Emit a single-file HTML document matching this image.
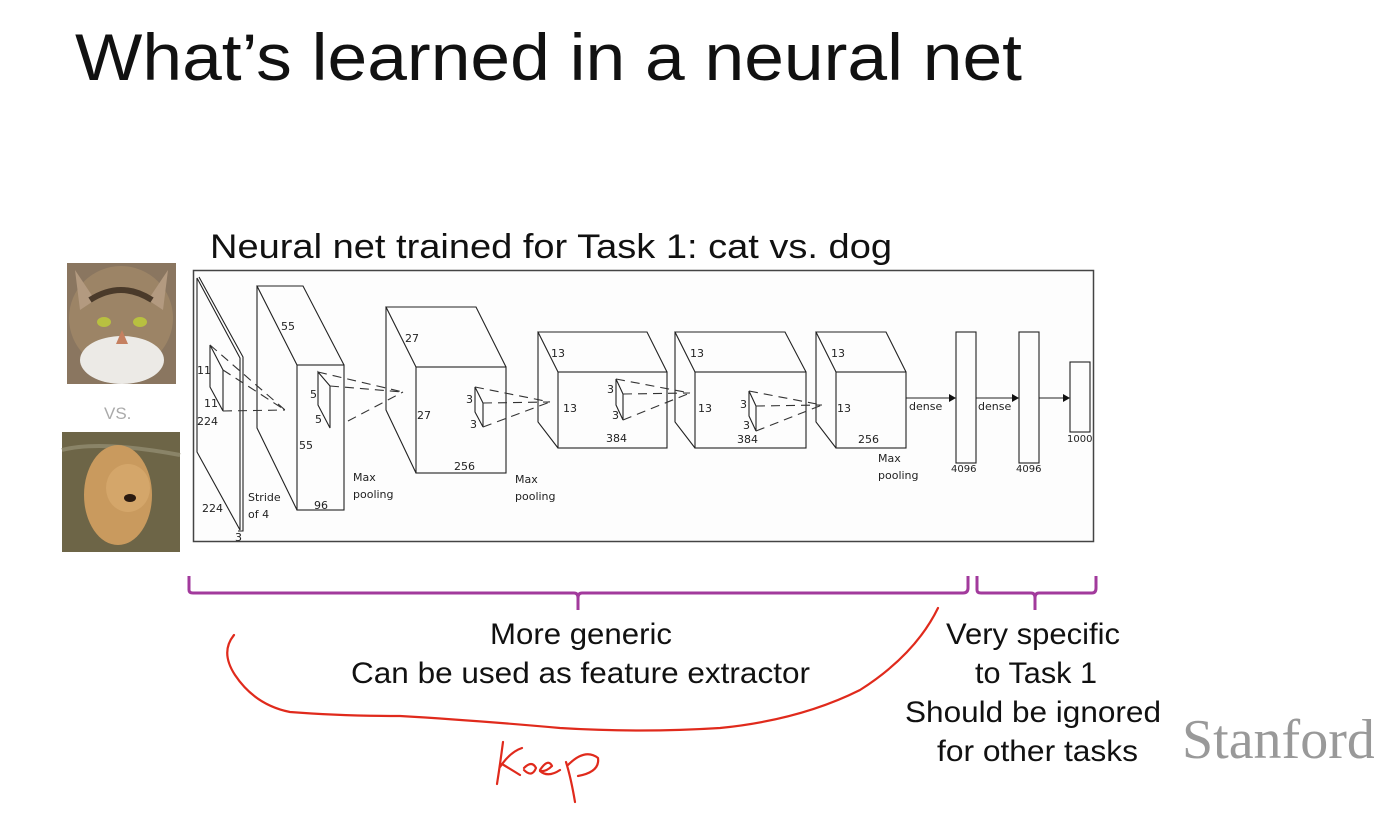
<!DOCTYPE html>
<html><head><meta charset="utf-8"><style>
html,body{margin:0;padding:0;background:#fff;width:1374px;height:818px;overflow:hidden}
svg{display:block}
.s{font-family:"DejaVu Sans",sans-serif;font-size:11px;fill:#222}
.h{font-family:"Liberation Sans",sans-serif;fill:#111}
</style></head><body>
<svg width="1374" height="818" viewBox="0 0 1374 818" xmlns="http://www.w3.org/2000/svg">
<rect width="1374" height="818" fill="#fff"/>
<text class="h" x="75" y="80" font-size="66" textLength="947" lengthAdjust="spacingAndGlyphs">What’s learned in a neural net</text>
<text class="h" x="210" y="258" font-size="34" textLength="682" lengthAdjust="spacingAndGlyphs">Neural net trained for Task 1: cat vs. dog</text>

<!-- cat -->
<g>
<rect x="67" y="263" width="109" height="121" fill="#8a7660"/>
<ellipse cx="121" cy="318" rx="52" ry="52" fill="#9c8466"/>
<polygon points="75,270 95,300 80,310" fill="#b39a80"/>
<polygon points="168,270 148,300 163,310" fill="#b39a80"/>
<path d="M90 300 Q121 280 152 300" stroke="#4a3a2a" stroke-width="6" fill="none"/>
<ellipse cx="122" cy="360" rx="42" ry="24" fill="#eceae6"/>
<ellipse cx="104" cy="322" rx="7" ry="5" fill="#b8c040"/>
<ellipse cx="140" cy="322" rx="7" ry="5" fill="#b8c040"/>
<path d="M122 330 L116 344 L128 344Z" fill="#c58060"/>
</g>
<text x="104" y="419" font-family="Liberation Sans,sans-serif" font-size="17" fill="#aaa">VS.</text>
<!-- dog -->
<g>
<rect x="62" y="432" width="118" height="120" fill="#6d6547"/>
<path d="M62 450 Q100 440 180 455" stroke="#8a8468" stroke-width="4" fill="none"/>
<ellipse cx="118" cy="495" rx="34" ry="50" fill="#c99a5e"/>
<ellipse cx="128" cy="488" rx="22" ry="24" fill="#d4a66a"/>
<ellipse cx="130" cy="498" rx="6" ry="4" fill="#2a1a10"/>
</g>

<!-- network box -->
<rect x="193.5" y="270.5" width="900" height="271" fill="#fdfdfd" stroke="#444" stroke-width="1.5"/>
<g fill="none" stroke="#222" stroke-width="1.1">
<polygon points="197,278 240,358 240,530 197,452"/>
<polyline points="199,277 243,357 243,531 238,531"/>
<polygon points="210,345 223,370 223,411 210,387"/>
<polyline points="297,365 257,286 303,286 344,365"/>
<rect x="297" y="365" width="47" height="145"/>
<polyline points="257,286 257,428 297,510"/>
<polygon points="318,372 330,386 330,428 318,405"/>
<polyline points="416,367 386,307 476,307 506,367"/>
<rect x="416" y="367" width="90" height="106"/>
<polyline points="386,307 386,410 416,473"/>
<polygon points="475,387 483,403 483,427 475,412"/>
<polyline points="558,372 538,332 647,332 667,372"/>
<rect x="558" y="372" width="109" height="76"/>
<polyline points="538,332 538,422 558,448"/>
<polygon points="616,379 623,394 623,420 616,405"/>
<polyline points="695,372 675,332 785,332 806,372"/>
<rect x="695" y="372" width="111" height="76"/>
<polyline points="675,332 675,422 695,448"/>
<polygon points="749,391 756,406 756,431 749,416"/>
<polyline points="836,372 816,332 886,332 906,372"/>
<rect x="836" y="372" width="70" height="76"/>
<polyline points="816,332 816,422 836,448"/>
<rect x="956" y="332" width="20" height="131"/>
<rect x="1019" y="332" width="20" height="131"/>
<rect x="1070" y="362" width="20" height="70"/>
<line x1="906" y1="398" x2="950" y2="398"/>
<line x1="976" y1="398" x2="1013" y2="398"/>
<line x1="1039" y1="398" x2="1064" y2="398"/>
</g>
<g fill="#111"><path d="M956 398 l-7 -4 v8z"/><path d="M1019 398 l-7 -4 v8z"/><path d="M1070 398 l-7 -4 v8z"/></g>
<g fill="none" stroke="#333" stroke-width="1.1" stroke-dasharray="9,6">
<line x1="210" y1="345" x2="285" y2="410"/>
<line x1="223" y1="370" x2="285" y2="410"/>
<line x1="223" y1="411" x2="285" y2="410"/>
<line x1="318" y1="372" x2="403" y2="392"/>
<line x1="330" y1="386" x2="403" y2="392"/>
<line x1="348" y1="421" x2="403" y2="392"/>
<line x1="475" y1="387" x2="550" y2="402"/>
<line x1="483" y1="403" x2="550" y2="402"/>
<line x1="483" y1="427" x2="550" y2="402"/>
<line x1="616" y1="379" x2="690" y2="393"/>
<line x1="623" y1="394" x2="690" y2="393"/>
<line x1="623" y1="420" x2="690" y2="393"/>
<line x1="749" y1="391" x2="822" y2="405"/>
<line x1="756" y1="406" x2="822" y2="405"/>
<line x1="756" y1="431" x2="822" y2="405"/>
</g>
<g class="s">
<text x="197" y="374">11</text><text x="204" y="407">11</text><text x="197" y="425">224</text><text x="202" y="512">224</text><text x="235" y="541">3</text>
<text x="281" y="330">55</text><text x="310" y="398">5</text><text x="315" y="423">5</text><text x="299" y="449">55</text><text x="314" y="509">96</text>
<text x="248" y="501">Stride</text><text x="248" y="518">of 4</text>
<text x="353" y="481">Max</text><text x="353" y="498">pooling</text>
<text x="405" y="342">27</text><text x="417" y="419">27</text><text x="466" y="403">3</text><text x="470" y="428">3</text><text x="454" y="470">256</text>
<text x="515" y="483">Max</text><text x="515" y="500">pooling</text>
<text x="551" y="357">13</text><text x="563" y="412">13</text><text x="607" y="393">3</text><text x="612" y="419">3</text><text x="606" y="442">384</text>
<text x="690" y="357">13</text><text x="698" y="412">13</text><text x="740" y="408">3</text><text x="743" y="429">3</text><text x="737" y="443">384</text>
<text x="831" y="357">13</text><text x="837" y="412">13</text><text x="858" y="443">256</text>
<text x="878" y="462">Max</text><text x="878" y="479">pooling</text>
<text x="909" y="410">dense</text><text x="978" y="410">dense</text>
<text x="951" y="472" font-size="10">4096</text><text x="1016" y="472" font-size="10">4096</text><text x="1067" y="442" font-size="10">1000</text>
</g>

<!-- brackets -->
<g fill="none" stroke="#a23a9c" stroke-width="3" stroke-linejoin="round">
<path d="M189 576 V590 Q189 593 193 593 H574 Q578 593 578 598 V610 M578 598 Q578 593 582 593 H963 Q968 593 968 588 V576"/>
<path d="M977 576 V590 Q977 593 981 593 H1031 Q1035 593 1035 598 V610 M1035 598 Q1035 593 1039 593 H1092 Q1096 593 1096 588 V576"/>
</g>
<g font-family="Liberation Sans,sans-serif" font-size="30" fill="#111" lengthAdjust="spacingAndGlyphs">
<text x="490" y="644" textLength="182" lengthAdjust="spacingAndGlyphs">More generic</text>
<text x="351" y="683" textLength="459" lengthAdjust="spacingAndGlyphs">Can be used as feature extractor</text>
<text x="946" y="644" textLength="174" lengthAdjust="spacingAndGlyphs">Very specific</text>
<text x="975" y="683" textLength="122" lengthAdjust="spacingAndGlyphs">to Task 1</text>
<text x="905" y="722" textLength="256" lengthAdjust="spacingAndGlyphs">Should be ignored</text>
<text x="937" y="761" textLength="201" lengthAdjust="spacingAndGlyphs">for other tasks</text>
</g>
<text x="1182" y="758" font-family="Liberation Serif,serif" font-size="56" fill="#999">Stanford</text>

<!-- red handwriting -->
<g fill="none" stroke="#e02a1c" stroke-width="2.2" stroke-linecap="round" stroke-linejoin="round">
<path d="M234 635 Q220 652 235 675 Q255 705 290 712 Q340 716 400 716 Q470 720 560 728 Q640 733 720 728 Q800 720 860 690 Q915 655 938 608"/>
<path d="M503 742 Q500 765 497 784 M500 767 Q510 752 522 748 M502 764 Q512 770 520 775"/>
<path d="M524 768 Q532 760 536 768 Q532 778 524 770 M540 770 Q548 758 552 766 Q546 772 540 771 Q548 778 560 770"/>
<path d="M566 762 Q571 778 575 802 M568 765 Q585 748 598 758 Q600 772 578 776"/>
</g>
</svg>
</body></html>
